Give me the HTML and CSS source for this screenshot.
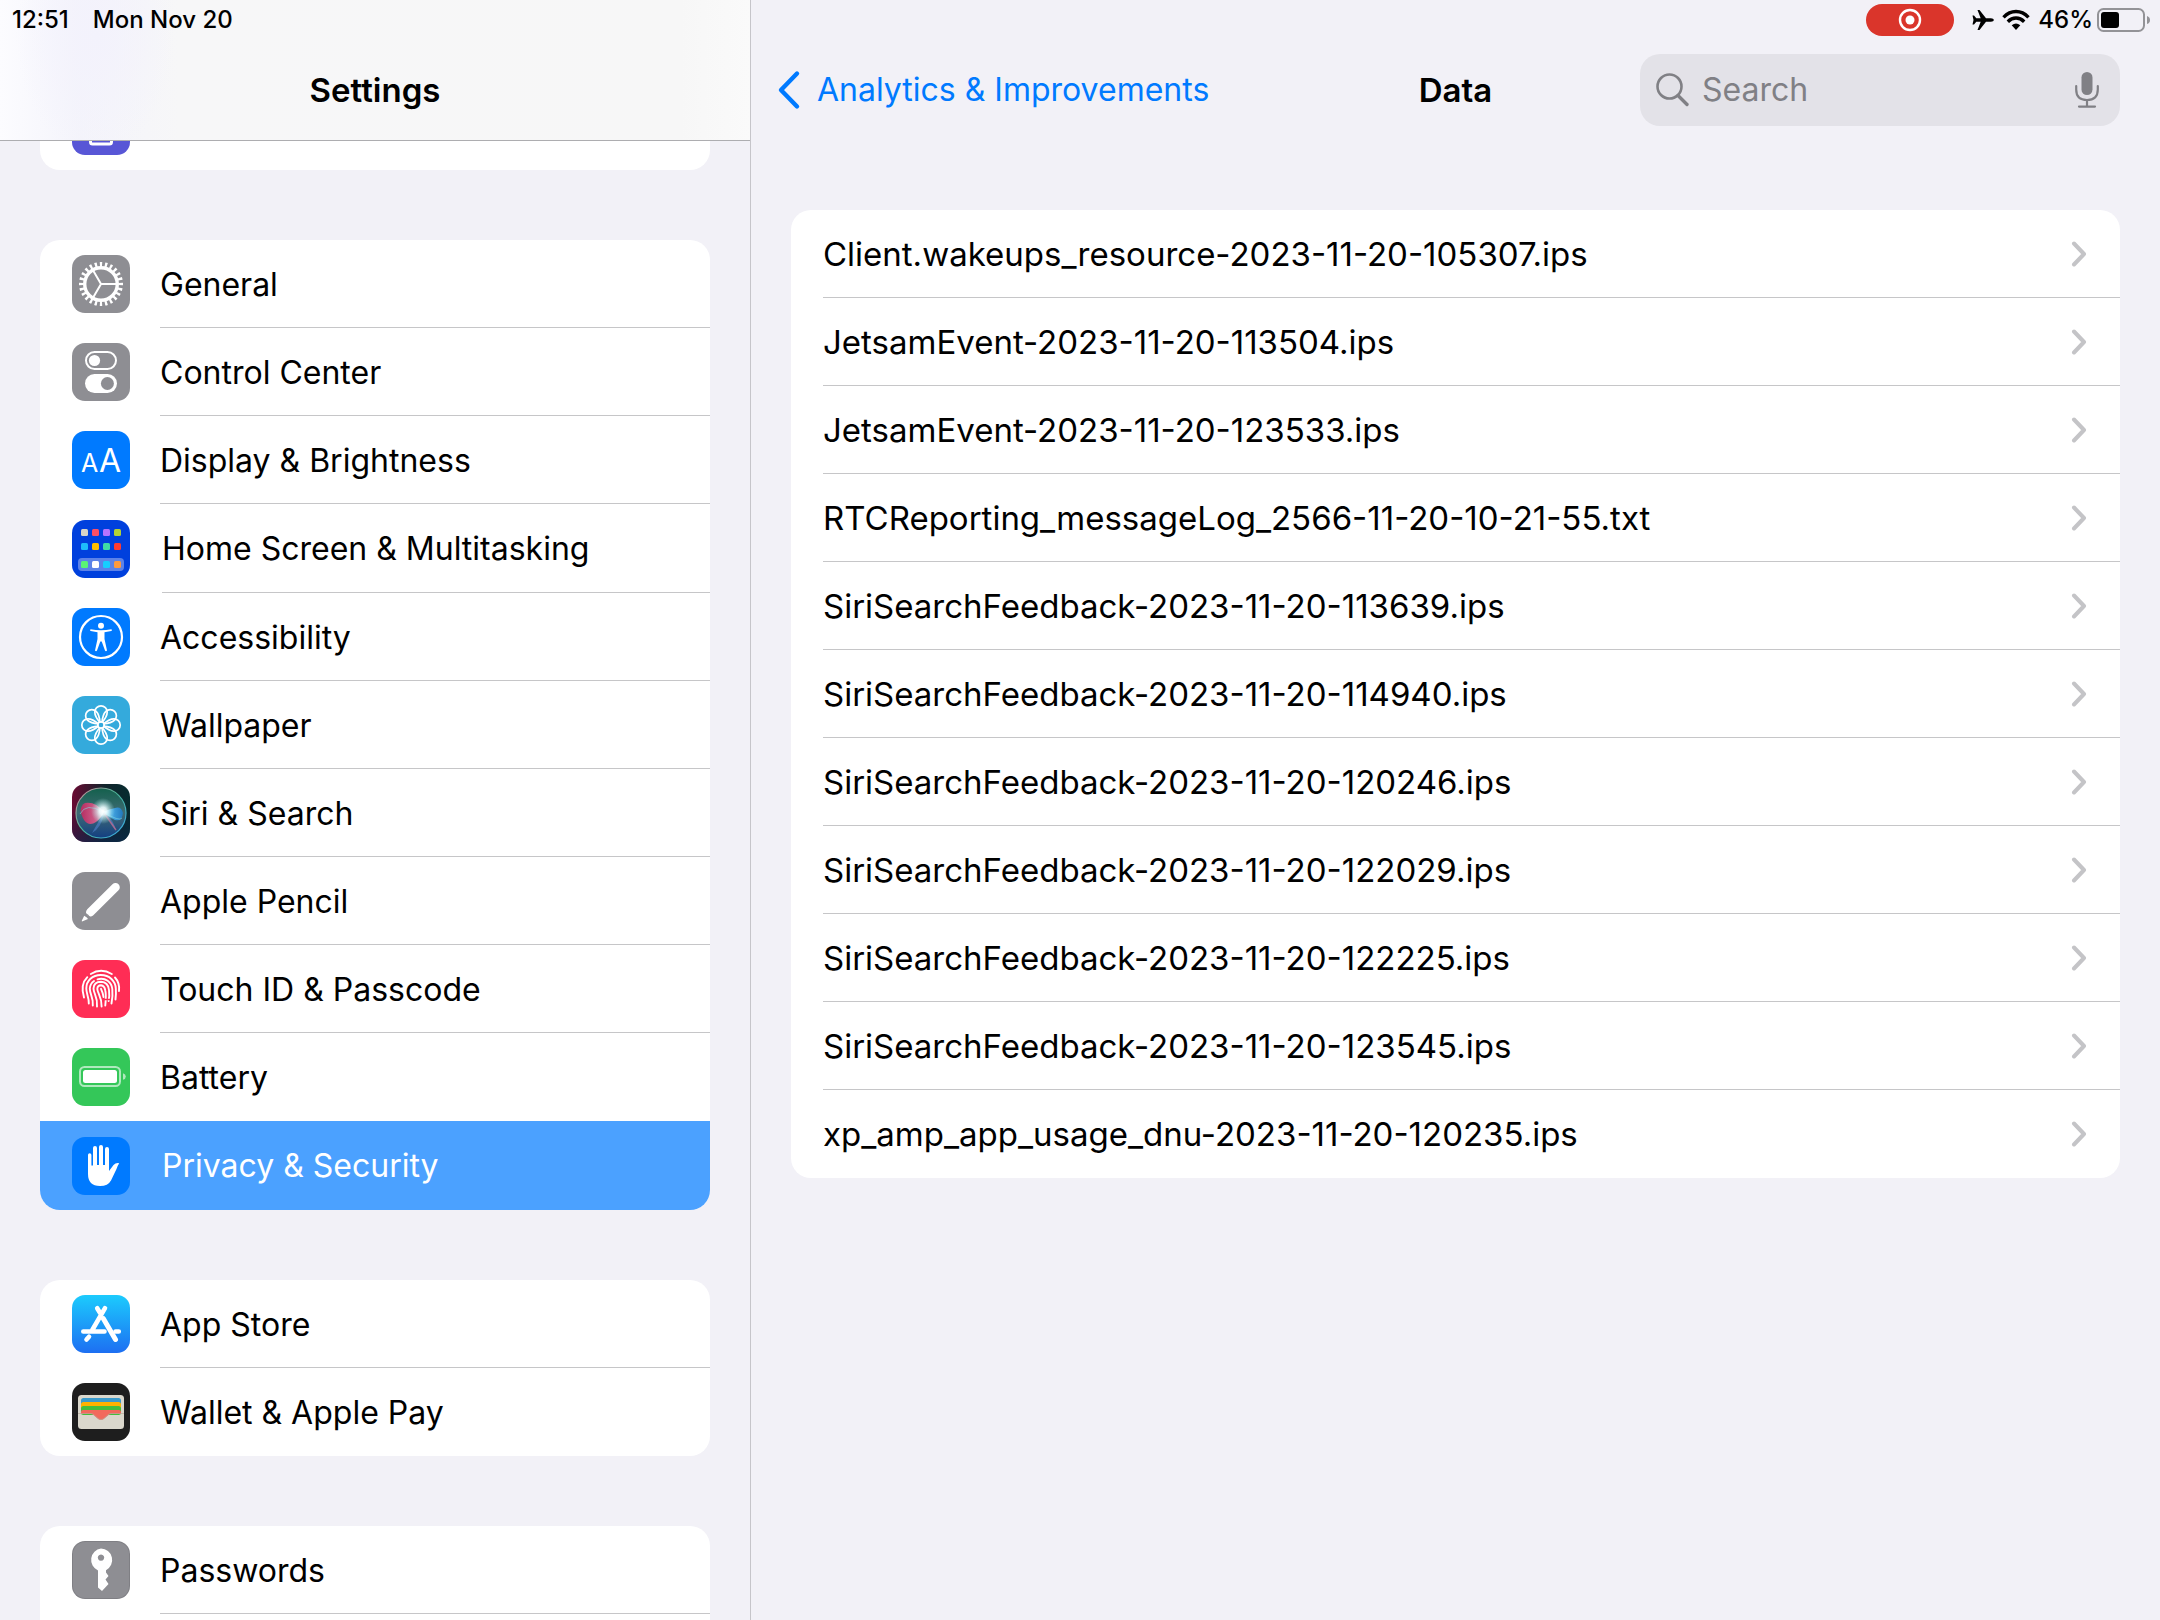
FILE: index.html
```html
<!DOCTYPE html>
<html lang="en">
<head>
<meta charset="utf-8">
<meta name="viewport" content="width=device-width, initial-scale=1">
<title>Settings</title>
<link rel="stylesheet" href="styles.css">
</head>
<body>
<div class="app">
  <aside class="sidebar">
    <header class="sidebar-header">
      <div class="status"><time>12:51</time><span>Mon Nov 20</span></div>
      <h1 class="title">Settings</h1>
    </header>
    <nav class="sidebar-list" aria-label="Settings">
      <ul class="card card-scrolled">
        <li><a class="item" href="#screen-time" aria-label="Screen Time">
          <svg class="icon" viewBox="0 0 58 58"><rect width="58" height="58" rx="13" fill="#5856d6"/><rect x="18.500" y="34" width="21" height="13" rx="2" fill="none" stroke="#fff" stroke-width="3"/></svg>
        </a></li>
      </ul>
      <ul class="card">
        <li><a class="item" href="#general">
          <svg class="icon" viewBox="0 0 58 58"><rect width="58" height="58" rx="13" fill="#8e8e93"/><g fill="none" stroke="#fff"><circle cx="29" cy="29" r="16.300" stroke-width="3.400"/><circle cx="29" cy="29" r="19.700" stroke-width="4.600" pathLength="24" stroke-dasharray=".45 .55" stroke-dashoffset=".225"/><path d="M29 29H45M29 29L21 15.140M29 29L21 42.860" stroke-width="2"/></g></svg>
          <span class="label">General</span></a></li>
        <li><a class="item" href="#control-center">
          <svg class="icon" viewBox="0 0 58 58"><rect width="58" height="58" rx="13" fill="#8e8e93"/><rect x="14" y="9" width="30" height="17" rx="8.500" fill="none" stroke="#fff" stroke-width="2"/><circle cx="22.500" cy="17.500" r="5.600" fill="#fff"/><rect x="13" y="31" width="32" height="19" rx="9.500" fill="#fff"/><circle cx="35.400" cy="40.500" r="6.500" fill="#8e8e93"/></svg>
          <span class="label">Control Center</span></a></li>
        <li><a class="item" href="#display">
          <svg class="icon" viewBox="0 0 58 58"><rect width="58" height="58" rx="13" fill="#007aff"/><g class="glyph-text"><text x="9" y="41" font-size="25">A</text><text x="27" y="41" font-size="32">A</text></g></svg>
          <span class="label">Display &amp; Brightness</span></a></li>
        <li><a class="item item-symbol" href="#home-screen">
          <svg class="icon" viewBox="0 0 58 58"><rect width="58" height="58" rx="13" fill="#0040dd"/><rect x="6" y="38" width="46" height="13" rx="4" fill="#5c82e8"/><rect x="9" y="9" width="7" height="7" rx="1.500" fill="#d8d4c8"/><rect x="20" y="9" width="7" height="7" rx="1.500" fill="#ff4f64"/><rect x="31" y="9" width="7" height="7" rx="1.500" fill="#b673ff"/><rect x="42" y="9" width="7" height="7" rx="1.500" fill="#b3d235"/><rect x="9" y="23" width="7" height="7" rx="1.500" fill="#1ebcfb"/><rect x="20" y="23" width="7" height="7" rx="1.500" fill="#ffc000"/><rect x="31" y="23" width="7" height="7" rx="1.500" fill="#40dba5"/><rect x="42" y="23" width="7" height="7" rx="1.500" fill="#ff3b30"/><rect x="9" y="41" width="7" height="7" rx="1.500" fill="#5af575"/><rect x="20" y="41" width="7" height="7" rx="1.500" fill="#fff"/><rect x="31" y="41" width="7" height="7" rx="1.500" fill="#16ceff"/><rect x="42" y="41" width="7" height="7" rx="1.500" fill="#ff9a3e"/></svg>
          <span class="label">Home Screen &amp; Multitasking</span></a></li>
        <li><a class="item" href="#accessibility">
          <svg class="icon" viewBox="0 0 58 58"><rect width="58" height="58" rx="13" fill="#007aff"/><circle cx="29" cy="29" r="21" fill="none" stroke="#fff" stroke-width="2.200"/><circle cx="29" cy="17.800" r="3" fill="#fff"/><path d="M18.500 21.200Q29 23.200 39.500 21.200Q40.500 22.700 39.300 23L32.500 24.300V31L35 42.500Q34 43.700 33 42.600L29.700 33.500H28.300L25 42.600Q24 43.700 23 42.500L25.500 31V24.300L18.700 23Q17.500 22.700 18.500 21.200Z" fill="#fff"/></svg>
          <span class="label">Accessibility</span></a></li>
        <li><a class="item" href="#wallpaper">
          <svg class="icon" viewBox="0 0 58 58"><defs><path id="petal" d="M28 26.500C24.500 22.500 22.800 19 22.800 16a6.200 6.200 0 0 1 12.400 0C35.200 19 33.500 22.500 30 26.500"/></defs><rect width="58" height="58" rx="13" fill="#34aadc"/><g fill="none" stroke="#fff" stroke-width="1.700"><use href="#petal"/><use href="#petal" transform="rotate(45 29 29)"/><use href="#petal" transform="rotate(90 29 29)"/><use href="#petal" transform="rotate(135 29 29)"/><use href="#petal" transform="rotate(180 29 29)"/><use href="#petal" transform="rotate(225 29 29)"/><use href="#petal" transform="rotate(270 29 29)"/><use href="#petal" transform="rotate(315 29 29)"/><circle cx="29" cy="29" r="3.200"/></g></svg>
          <span class="label">Wallpaper</span></a></li>
        <li><a class="item" href="#siri">
          <svg class="icon" viewBox="0 0 58 58"><defs>
            <linearGradient id="siri-left" x1="0" x2="1"><stop offset="0" stop-color="#6a0a32"/><stop offset=".55" stop-color="#12232b"/><stop offset="1" stop-color="#062c30"/></linearGradient>
            <linearGradient id="siri-shade" x1="0" y1="0" x2="0" y2="1"><stop offset=".4" stop-color="#0b1c3c" stop-opacity="0"/><stop offset="1" stop-color="#0c2650" stop-opacity=".6"/></linearGradient>
            <linearGradient id="siri-ring" x1="0" y1="0" x2="1" y2="1"><stop offset="0" stop-color="#d88a9c"/><stop offset=".45" stop-color="#4cb597"/><stop offset="1" stop-color="#37a6e8"/></linearGradient>
            <linearGradient id="siri-orb" x1="0" y1="0" x2="0" y2="1"><stop offset="0" stop-color="#13604c"/><stop offset=".5" stop-color="#3f6b74"/><stop offset="1" stop-color="#133f82"/></linearGradient>
            <linearGradient id="siri-pink" x1="0" y1="0" x2="1" y2="0"><stop offset="0" stop-color="#c32861"/><stop offset=".7" stop-color="#e2628f"/><stop offset="1" stop-color="#fff"/></linearGradient>
            <linearGradient id="siri-blue" x1="0" y1="0" x2="1" y2="0"><stop offset="0" stop-color="#fff"/><stop offset=".45" stop-color="#46a8e4"/><stop offset="1" stop-color="#2278bd"/></linearGradient>
            <radialGradient id="siri-glow"><stop offset="0" stop-color="#fff"/><stop offset=".3" stop-color="#effeff" stop-opacity=".9"/><stop offset="1" stop-color="#9fe5e2" stop-opacity="0"/></radialGradient></defs>
            <rect width="58" height="58" rx="13" fill="url(#siri-left)"/><rect width="58" height="58" rx="13" fill="url(#siri-shade)"/>
            <circle cx="29" cy="29" r="25" fill="url(#siri-orb)" stroke="url(#siri-ring)" stroke-width="1.200"/>
            <path d="M32 28L20 49Q30 43 32 29L44 47Q42 36 32 28" fill="#5689d6" opacity=".55"/>
            <path d="M32 28Q23 17 13 19Q5 24 12 36Q17 43 24 38Q30 33 32 28Z" fill="url(#siri-pink)" opacity=".9"/>
            <path d="M30 28Q39 34 43 36Q50 38 51 29Q49 22 43 24Q38 25 30 28Z" fill="url(#siri-blue)"/>
            <path d="M8 30Q14 18 31 28T50 34" fill="none" stroke="#7fd7e0" opacity=".6"/>
            <path d="M32 29L44 46" stroke="#d06a8c" stroke-width="1.500" opacity=".7"/>
            <ellipse cx="31" cy="27" rx="12" ry="13" fill="url(#siri-glow)"/></svg>
          <span class="label">Siri &amp; Search</span></a></li>
        <li><a class="item" href="#pencil">
          <svg class="icon" viewBox="0 0 58 58"><rect width="58" height="58" rx="13" fill="#8e8e93"/><path d="M43.500 15.200L18.300 40.200" stroke="#fff" stroke-width="8.600" stroke-linecap="round"/><path d="M12.200 43.800Q15.500 45.500 16 47L10 49.500Q9.500 49 10 48.300Z" fill="#fff"/><path d="M11 40.800Q17 42 18.300 47.500" fill="none" stroke="#8e8e93" stroke-width="1.200"/></svg>
          <span class="label">Apple Pencil</span></a></li>
        <li><a class="item" href="#touch-id">
          <svg class="icon" viewBox="0 0 58 58"><rect width="58" height="58" rx="13" fill="#ff2d55"/><g fill="none" stroke="#fff" stroke-width="1.900" stroke-linecap="round"><path d="M18.800 14Q29 7.500 39.800 14"/><path d="M12 37.500Q8 24.500 15.300 17.200M43 17.500Q48 23 47 31"/><path d="M16.800 43.500C17 37 14.200 33.500 14.300 28.500C14.300 20.500 20.500 15 28.800 15C37.500 15 43.500 21 43.800 28.500Q44.200 34.500 43.500 39.500"/><path d="M20.800 45.500C21.600 37 17.800 35 17.800 28.500Q18.200 23.500 22 21M25.500 19.300C33.500 17 39.600 22.500 40.300 29Q41 36 39.500 43.500"/><path d="M25 46.500C26 36.500 21.500 34 21.500 28.500C21.800 23.500 25 21.800 29 21.800C33.800 22 36.500 25.500 37 30Q37.700 36 36.600 41"/><path d="M29.600 46.500C30 37 25.500 33.500 25.300 29Q25.500 25.300 29 25.300Q32.500 25.700 33.300 30.500Q34.300 35 33.300 45.500"/><path d="M29 28.800Q31.200 33.500 31.500 37"/></g><path d="M31 39.500h7" stroke="#ff2d55" stroke-width="1.500"/></svg>
          <span class="label">Touch ID &amp; Passcode</span></a></li>
        <li><a class="item item-before-current" href="#battery">
          <svg class="icon" viewBox="0 0 58 58"><rect width="58" height="58" rx="13" fill="#34c759"/><rect x="8" y="19" width="40" height="19" rx="4.500" fill="none" stroke="#aee9bd" stroke-width="2"/><rect x="11" y="22" width="34" height="13" rx="2.500" fill="#fff"/><path d="M51 25.200Q53.800 26 53.800 28.500T51 31.800Z" fill="#aee9bd"/></svg>
          <span class="label">Battery</span></a></li>
        <li><a class="item item-symbol item-current" href="#privacy" aria-current="page">
          <svg class="icon" viewBox="0 0 58 58"><rect width="58" height="58" rx="13" fill="#007aff"/><path d="M16 18a1.700 1.700 0 0 1 3.400 0V28.500H21V11a2 2 0 0 1 4 0V28H27V10a2 2 0 0 1 4 0V28H33V12a2 2 0 0 1 4 0V34L41.500 28Q44 25.500 47.200 26.300Q46 28 44.500 32L39 43.500Q36 49 28 49Q16 49 16 37Z" fill="#fff"/></svg>
          <span class="label">Privacy &amp; Security</span></a></li>
      </ul>
      <ul class="card">
        <li><a class="item" href="#app-store">
          <svg class="icon" viewBox="0 0 58 58"><defs><linearGradient id="store" x1="0" y1="0" x2="0" y2="1"><stop offset="0" stop-color="#1ccbfd"/><stop offset="1" stop-color="#1d6ff2"/></linearGradient></defs><rect width="58" height="58" rx="13" fill="url(#store)"/><g fill="none" stroke="#fff" stroke-width="4.600" stroke-linecap="round"><path d="M33 13.200L20.300 35M25.200 13.200L27.800 17.500M17 41.800L14.500 44.500M11.300 36.500H32.500M43.500 36.500H46.800"/><path d="M31.300 23.500L43.500 44.500" stroke-width="5"/></g></svg>
          <span class="label">App Store</span></a></li>
        <li><a class="item" href="#wallet">
          <svg class="icon" viewBox="0 0 58 58"><rect width="58" height="58" rx="13" fill="#1e1e1e"/><rect x="6" y="12" width="46" height="34" rx="3.500" fill="#dad7cc"/><rect x="9" y="15" width="40" height="12" rx="2.500" fill="#3b9acb"/><rect x="9" y="19" width="40" height="12" rx="2.500" fill="#ffb100"/><rect x="9" y="23" width="40" height="9" rx="2.500" fill="#45bd3c"/><path d="M9 31V29Q9 27 11 27H47Q49 27 49 29V31H39C35.500 31 33 37 29 37S22.500 31 19 31Z" fill="#f2695c"/><path d="M6 30.500H19C22.500 30.500 25 36.500 29 36.500S35.500 30.500 39 30.500H52" fill="none" stroke="#b8a79b" stroke-width=".7"/></svg>
          <span class="label">Wallet &amp; Apple Pay</span></a></li>
      </ul>
      <ul class="card">
        <li><a class="item" href="#passwords">
          <svg class="icon" viewBox="0 0 58 58"><rect width="58" height="58" rx="13" fill="#7f7f84"/><rect x="1" y="1" width="56" height="56" rx="12" fill="#8e8e93"/><path fill-rule="evenodd" d="M29 7.500a11.500 11.500 0 0 1 5 21.700V31.500L36.500 35L33.500 38.500L36.500 43L30 50L26 46.500V29.400A11.500 11.500 0 0 1 29 7.500ZM29 13.400a3.200 3.200 0 1 0 .01 0Z" fill="#fff"/></svg>
          <span class="label">Passwords</span></a></li>
        <li><a class="item" href="#mail" aria-label="Mail"></a></li>
      </ul>
    </nav>
  </aside>

  <main class="main">
    <header class="main-header">
      <div class="status status-right">
        <button class="record" type="button" aria-label="Screen recording"><svg width="24" height="26" viewBox="0 0 24 26"><circle cx="12" cy="13" r="10" fill="none" stroke="#fff" stroke-width="2.400"/><circle cx="12" cy="13" r="4.500" fill="#fff"/></svg></button>
        <svg class="plane" width="22" height="22" viewBox="0 0 22 22"><path d="M22 11Q21.500 12.700 19 12.700H14L7.500 21H5.500L8.700 12.700H4.300L2 15.500H.5L1.500 11L.5 6.500H2L4.300 9.300H8.700L5.500 1H7.500L14 9.300H19Q21.500 9.300 22 11Z"/></svg>
        <svg class="wifi" width="28" height="22" viewBox="0 0 28 22"><g fill="none" stroke="#000" stroke-width="3.400"><path d="M1.500 8.300Q7 2.500 14 2.500T26.500 8.300"/><path d="M5.800 12.700Q9.500 9 14 9T22.200 12.700"/></g><path d="M9.700 16.300Q14 12.500 18.300 16.300L14 21Z"/></svg>
        <span class="percent">46%</span>
        <svg class="cell" width="54" height="24" viewBox="0 0 54 24"><rect x="1" y="1" width="46" height="22" rx="5.500" fill="none" stroke="#939397" stroke-width="2"/><rect x="4" y="4" width="18" height="16" rx="3" fill="#000"/><path d="M50 8Q53 9 53 12T50 16Z" fill="#939397"/></svg>
      </div>
      <div class="toolbar">
        <a class="back" href="#analytics"><svg width="24" height="40" viewBox="0 0 24 40"><path d="M20 3.500L4 20L20 36.500" fill="none" stroke="#007aff" stroke-width="4.400" stroke-linecap="round" stroke-linejoin="round"/></svg><span>Analytics &amp; Improvements</span></a>
        <h2 class="title">Data</h2>
        <div class="search">
          <svg width="34" height="34" viewBox="0 0 34 34"><circle cx="13.500" cy="13.500" r="12" fill="none" stroke="#808085" stroke-width="2.600"/><path d="M22 22.500L31 31.500" stroke="#808085" stroke-width="3.400" stroke-linecap="round"/></svg>
          <input type="search" placeholder="Search" aria-label="Search">
          <button class="mic" type="button" aria-label="Dictate"><svg width="24" height="36" viewBox="0 0 24 36"><rect x="6.500" y="0" width="11" height="23" rx="5.500" fill="#808085"/><path d="M1.200 14V17.500Q1.200 28 12 28T22.800 17.500V14M12 28V34M4 34.600H20" fill="none" stroke="#808085" stroke-width="2.200" stroke-linecap="round"/></svg></button>
        </div>
      </div>
    </header>
    <ul class="card files">
      <li><a class="file" href="#f1"><span>Client.wakeups_resource-2023-11-20-105307.ips</span><svg class="chevron" viewBox="0 0 16 26"><path d="M3 2.500L13 13L3 23.500"/></svg></a></li>
      <li><a class="file" href="#f2"><span>JetsamEvent-2023-11-20-113504.ips</span><svg class="chevron" viewBox="0 0 16 26"><path d="M3 2.500L13 13L3 23.500"/></svg></a></li>
      <li><a class="file" href="#f3"><span>JetsamEvent-2023-11-20-123533.ips</span><svg class="chevron" viewBox="0 0 16 26"><path d="M3 2.500L13 13L3 23.500"/></svg></a></li>
      <li><a class="file" href="#f4"><span>RTCReporting_messageLog_2566-11-20-10-21-55.txt</span><svg class="chevron" viewBox="0 0 16 26"><path d="M3 2.500L13 13L3 23.500"/></svg></a></li>
      <li><a class="file" href="#f5"><span>SiriSearchFeedback-2023-11-20-113639.ips</span><svg class="chevron" viewBox="0 0 16 26"><path d="M3 2.500L13 13L3 23.500"/></svg></a></li>
      <li><a class="file" href="#f6"><span>SiriSearchFeedback-2023-11-20-114940.ips</span><svg class="chevron" viewBox="0 0 16 26"><path d="M3 2.500L13 13L3 23.500"/></svg></a></li>
      <li><a class="file" href="#f7"><span>SiriSearchFeedback-2023-11-20-120246.ips</span><svg class="chevron" viewBox="0 0 16 26"><path d="M3 2.500L13 13L3 23.500"/></svg></a></li>
      <li><a class="file" href="#f8"><span>SiriSearchFeedback-2023-11-20-122029.ips</span><svg class="chevron" viewBox="0 0 16 26"><path d="M3 2.500L13 13L3 23.500"/></svg></a></li>
      <li><a class="file" href="#f9"><span>SiriSearchFeedback-2023-11-20-122225.ips</span><svg class="chevron" viewBox="0 0 16 26"><path d="M3 2.500L13 13L3 23.500"/></svg></a></li>
      <li><a class="file" href="#f10"><span>SiriSearchFeedback-2023-11-20-123545.ips</span><svg class="chevron" viewBox="0 0 16 26"><path d="M3 2.500L13 13L3 23.500"/></svg></a></li>
      <li><a class="file" href="#f11"><span>xp_amp_app_usage_dnu-2023-11-20-120235.ips</span><svg class="chevron" viewBox="0 0 16 26"><path d="M3 2.500L13 13L3 23.500"/></svg></a></li>
    </ul>
  </main>
</div>
</body>
</html>
```
FILE: styles.css
```css
* { box-sizing: border-box; }

body {
  margin: 0;
  background: #f2f1f7;
  color: #000;
  font-family: Inter, "Liberation Sans", sans-serif;
  font-size: 32px;
  line-height: 40px;
}

ul { margin: 0; padding: 0; list-style: none; }
a { color: inherit; text-decoration: none; }
button { border: 0; padding: 0; background: none; font: inherit; }
svg { display: block; flex: none; }

.app {
  display: grid;
  grid-template-columns: 751px 1fr;
  height: 100vh;
  overflow: hidden;
}

/* Sidebar */
.sidebar {
  display: flex;
  flex-direction: column;
  min-height: 0;
  border-right: 1px solid #c6c5ca;
}

.sidebar-header {
  flex: none;
  height: 141px;
  border-bottom: 1px solid #adadb0;
  background:
    radial-gradient(ellipse 80px 120px at 96px 36px, #f3f2fc, transparent),
    linear-gradient(90deg, #fcfcff 0, #f4f4fb 80px, #f7f7f8 180px, #f7f7f7 680px, #fafafa 100%);
}

.status {
  display: flex;
  align-items: center;
  height: 40px;
  padding: 0 12px;
  gap: 24px;
  font-size: 24px;
  font-weight: 500;
}

.title {
  margin: 0;
  font-size: 33px;
  font-weight: 600;
  line-height: 40px;
  text-align: center;
}

.sidebar-header .title { padding-top: 30px; }

.sidebar-list {
  display: flex;
  flex-direction: column;
  flex: 1;
  gap: 70px;
  min-height: 0;
  overflow: hidden;
  padding: 0 40px;
}

.card {
  flex: none;
  overflow: hidden;
  border-radius: 20px;
  background: #fff;
}

.card-scrolled { margin-top: -59px; }

.item {
  display: flex;
  align-items: center;
  height: 88px;
  padding-left: 32px;
  gap: 30px;
}

.icon { width: 58px; height: 58px; }
.glyph-text { fill: #fff; font-weight: 400; }

.label {
  flex: 1;
  height: 100%;
  border-bottom: 1px solid #c6c6c8;
  line-height: 90px;
}

.item-symbol { height: 89px; gap: 32px; }
.item-before-current .label,
li:last-child .label { border-bottom: 0; }
.item-current { background: #4ba1ff; color: #fff; }

/* Detail pane */
.main-header { height: 210px; }

.status-right {
  justify-content: flex-end;
  padding: 0 9px 0 0;
  gap: 8px;
}

.record {
  display: grid;
  place-items: center;
  width: 88px;
  height: 32px;
  margin-right: 10px;
  border-radius: 16px;
  background: #da352b;
}

.percent { margin-right: -4px; }

.toolbar {
  display: grid;
  grid-template-columns: 1fr auto 1fr;
  align-items: center;
  padding: 14px 40px 0;
}

.back {
  display: flex;
  align-items: center;
  gap: 16px;
  margin-left: -14px;
  color: #007aff;
}

.search {
  display: flex;
  align-items: center;
  justify-self: end;
  width: 480px;
  height: 72px;
  padding: 0 21px 0 16px;
  gap: 12px;
  border-radius: 20px;
  background: #e3e2e8;
}

.search input {
  flex: 1;
  min-width: 0;
  padding: 0;
  border: 0;
  outline: 0;
  background: none;
  color: #000;
  font: inherit;
}

.search input::placeholder { color: #808085; opacity: 1; }

.files {
  margin: 0 40px;
  font-size: 33px;
}

.file {
  display: flex;
  align-items: center;
  justify-content: space-between;
  height: 88px;
  margin-left: 32px;
  padding-right: 33px;
  border-bottom: 1px solid #c6c6c8;
}

li:last-child .file { border-bottom: 0; }

.chevron {
  width: 16px;
  height: 26px;
  fill: none;
  stroke: #c4c4c7;
  stroke-width: 4;
  stroke-linecap: round;
  stroke-linejoin: round;
}
```
